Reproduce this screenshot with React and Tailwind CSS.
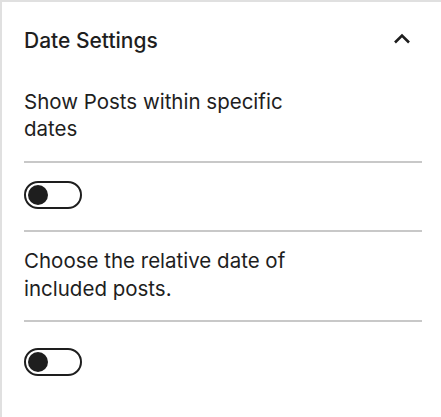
import React, { useState } from "react";

function Toggle({ checked, onChange }) {
  return (
    <button
      type="button"
      role="switch"
      aria-checked={checked}
      onClick={() => onChange(!checked)}
      className={`flex h-[28px] w-[58px] items-center rounded-full border-[2px] border-[#1e1e1e] p-[2px] ${
        checked ? "justify-end bg-[#1e1e1e]" : "justify-start bg-white"
      }`}
    >
      <span
        className={`block h-[20px] w-[20px] rounded-full ${
          checked ? "bg-white" : "bg-[#1e1e1e]"
        }`}
      />
    </button>
  );
}

export default function App() {
  const [open, setOpen] = useState(true);
  const [specific, setSpecific] = useState(false);
  const [relative, setRelative] = useState(false);

  return (
    <div
      className="min-h-screen border-l-2 border-t-2 border-[#e0e0e0] bg-white text-[#1e1e1e]"
      style={{ fontFamily: "Inter, 'Noto Sans', sans-serif" }}
    >
      <button
        type="button"
        onClick={() => setOpen(!open)}
        className="flex h-[78px] w-full items-center justify-between pl-[22px] pr-[30px] text-left"
      >
        <span className="text-[21px] font-medium">Date Settings</span>
        <svg width="18" height="11" viewBox="0 0 18 11" fill="none" className="-mt-[6px]">
          <path
            d={open ? "M2 9.5 L9 2.5 L16 9.5" : "M2 2.5 L9 9.5 L16 2.5"}
            stroke="#1e1e1e"
            strokeWidth="2.6"
          />
        </svg>
      </button>

      {open && (
        <div className="pl-[22px] pr-[19px]">
          <p className="mt-[8px] max-w-[290px] text-[20.5px] leading-[27px]">
            Show Posts within specific dates
          </p>
          <hr className="mt-[19px] border-t-2 border-[#c8c8c8]" />
          <div className="pb-[21px] pt-[18px]">
            <Toggle checked={specific} onChange={setSpecific} />
          </div>
          <hr className="border-t-2 border-[#c8c8c8]" />
          <p className="mt-[15px] max-w-[290px] text-[20.5px] leading-[28px]">
            Choose the relative date of included posts.
          </p>
          <hr className="mt-[17px] border-t-2 border-[#c8c8c8]" />
          <div className="py-[26px]">
            <Toggle checked={relative} onChange={setRelative} />
          </div>
        </div>
      )}
    </div>
  );
}
